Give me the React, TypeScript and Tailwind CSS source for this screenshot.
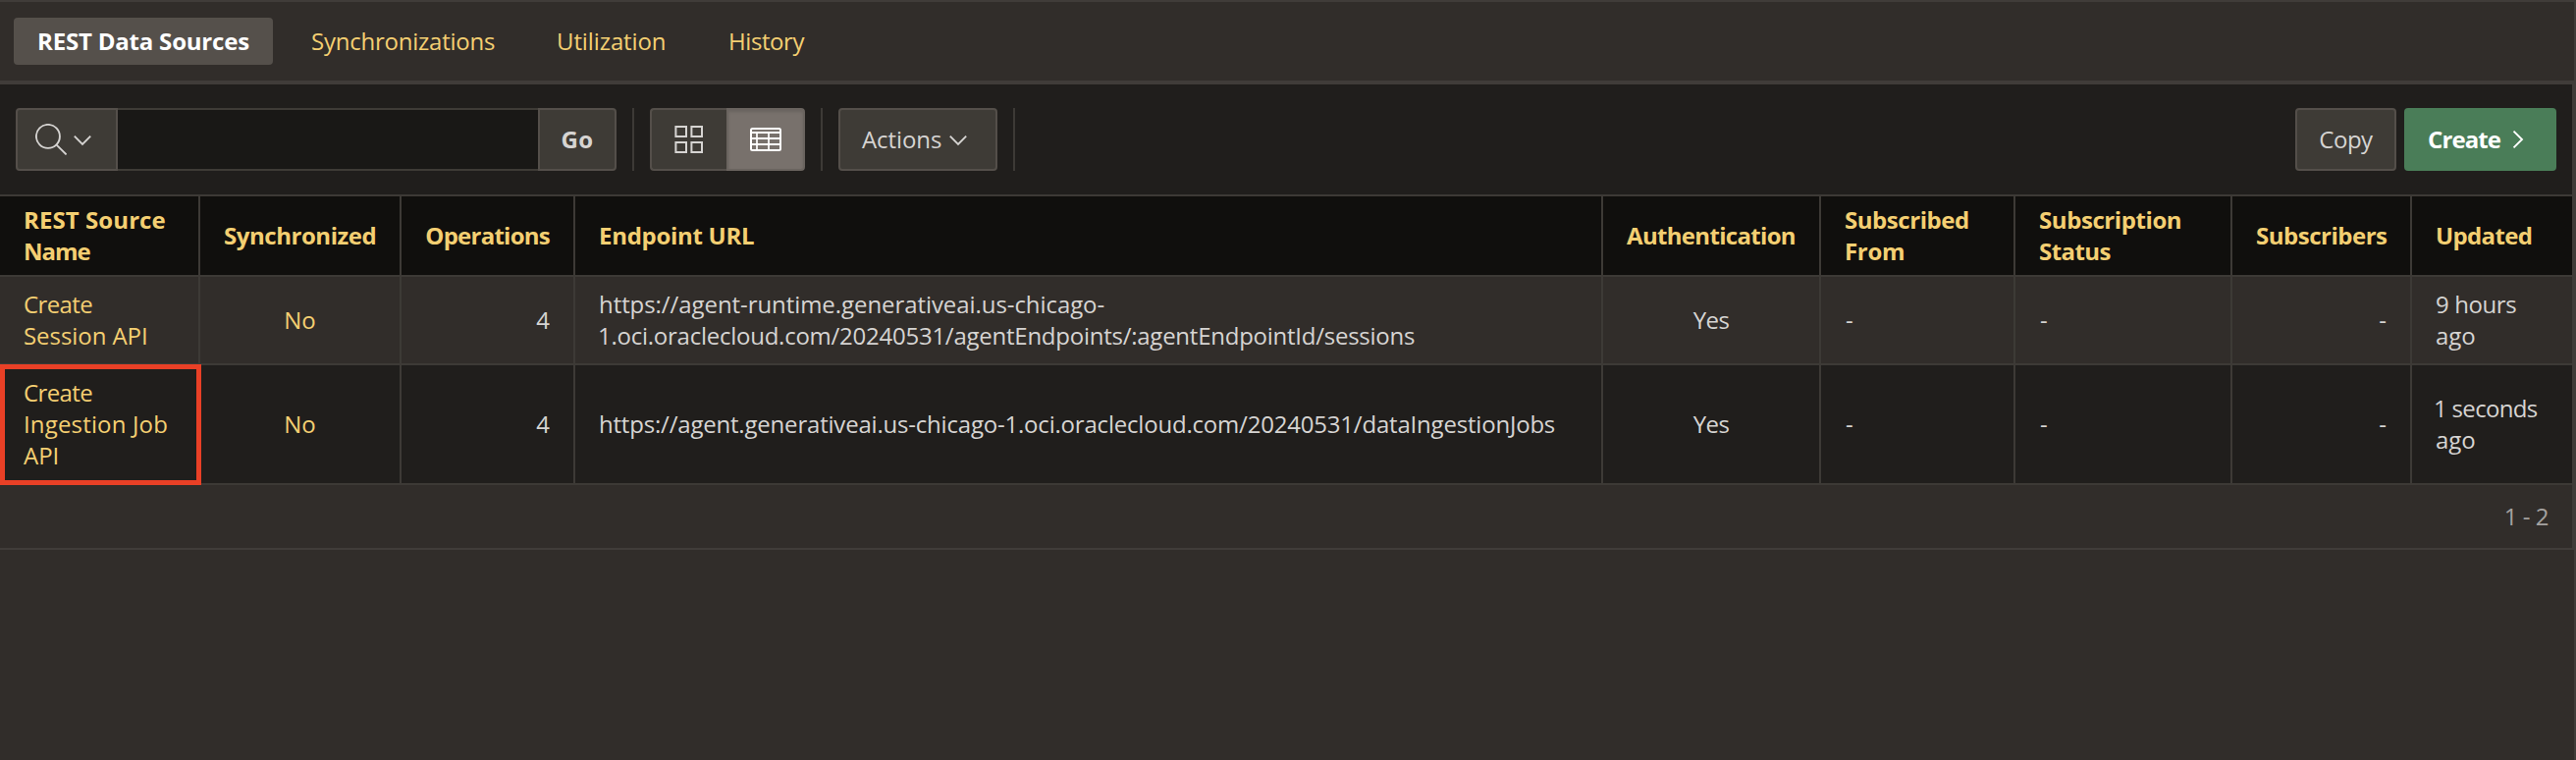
import type { ReactNode } from "react";

type Line = { text: string; track?: string };

type Column = { lines: Line[]; align: string };

const columns: Column[] = [
  { lines: [{ text: "REST Source", track: "tracking-[0.08px]" }, { text: "Name", track: "tracking-[-1px]" }], align: "text-left" },
  { lines: [{ text: "Synchronized", track: "tracking-[-0.45px]" }], align: "text-center" },
  { lines: [{ text: "Operations", track: "tracking-[-0.75px]" }], align: "text-right" },
  { lines: [{ text: "Endpoint URL", track: "tracking-[-0.29px]" }], align: "text-left" },
  { lines: [{ text: "Authentication", track: "tracking-[-0.68px]" }], align: "text-center" },
  { lines: [{ text: "Subscribed", track: "tracking-[-0.45px]" }, { text: "From", track: "tracking-[-0.31px]" }], align: "text-left" },
  { lines: [{ text: "Subscription", track: "tracking-[-0.42px]" }, { text: "Status", track: "tracking-[-0.56px]" }], align: "text-left" },
  { lines: [{ text: "Subscribers", track: "tracking-[-0.49px] mr-px" }], align: "text-right" },
  { lines: [{ text: "Updated", track: "tracking-[-0.65px]" }], align: "text-left" },
];

type Row = { bg: string; height: string; cells: Line[][]; highlighted?: boolean };

const dash: Line[] = [{ text: "-", track: "pl-px" }];

const rows: Row[] = [
  {
    bg: "bg-[#312d2a]",
    height: "h-[90px]",
    cells: [
      [{ text: "Create", track: "tracking-[-0.6px]" }, { text: "Session API", track: "tracking-[-0.06px]" }],
      [{ text: "No" }],
      [{ text: "4" }],
      [
        { text: "https://agent-runtime.generativeai.us-chicago-", track: "tracking-[-0.07px]" },
        { text: "1.oci.oraclecloud.com/20240531/agentEndpoints/:agentEndpointId/sessions", track: "tracking-[-0.25px] -ml-px" },
      ],
      [{ text: "Yes", track: "tracking-[-0.6px]" }],
      dash,
      dash,
      dash,
      [{ text: "9 hours", track: "tracking-[-0.4px]" }, { text: "ago" }],
    ],
  },
  {
    bg: "bg-[#201e1c]",
    height: "h-[122px]",
    highlighted: true,
    cells: [
      [{ text: "Create", track: "tracking-[-0.6px]" }, { text: "Ingestion Job", track: "tracking-[0.16px]" }, { text: "API" }],
      [{ text: "No" }],
      [{ text: "4" }],
      [{ text: "https://agent.generativeai.us-chicago-1.oci.oraclecloud.com/20240531/dataIngestionJobs", track: "tracking-[-0.2px]" }],
      [{ text: "Yes", track: "tracking-[-0.6px]" }],
      dash,
      dash,
      dash,
      [{ text: "1 seconds", track: "tracking-[-0.68px] -ml-0.5" }, { text: "ago" }],
    ],
  },
];

const tableGrid = "grid grid-cols-[204px_205px_177px_1047px_222px_198px_221px_183px_163px]";

function Lines({ lines }: { lines: Line[] }) {
  return (
    <>
      {lines.map((l) => (
        <div key={l.text} className={`whitespace-nowrap ${l.track ?? ""}`}>
          {l.text}
        </div>
      ))}
    </>
  );
}

function Cell({ lines, align, last, link }: { lines: Line[]; align: string; last: boolean; link?: boolean }) {
  return (
    <div
      className={`flex flex-col justify-center px-6 ${align} ${last ? "" : "border-r-2 border-[#3d3a36]"} ${link ? "text-[#f4cf72]" : ""}`}
    >
      <Lines lines={lines} />
    </div>
  );
}

function SearchIcon() {
  return (
    <svg width="32" height="32" viewBox="0 0 32 32" fill="none" stroke="currentColor" strokeWidth="1.9">
      <circle cx="12.9" cy="12.9" r="12" />
      <path d="M21.4 21.4 31.6 31.4" />
    </svg>
  );
}

function ChevronDown() {
  return (
    <svg width="20" height="20" viewBox="0 0 20 20" fill="none" stroke="currentColor" strokeWidth="1.9">
      <path d="M1.8 6.6 10 14.8 18.2 6.6" />
    </svg>
  );
}

function ChevronRight() {
  return (
    <svg width="12" height="20" viewBox="0 0 12 20" fill="none" stroke="currentColor" strokeWidth="1.9">
      <path d="M1.5 1.6 10 10 1.5 18.4" />
    </svg>
  );
}

function GridIcon() {
  return (
    <svg width="30" height="28" viewBox="0 0 30 28" fill="none" stroke="currentColor" strokeWidth="2">
      <rect x="1.4" y="1" width="10.6" height="10" />
      <rect x="17.4" y="1" width="10.6" height="10" />
      <rect x="1.4" y="17" width="10.6" height="10" />
      <rect x="17.4" y="17" width="10.6" height="10" />
    </svg>
  );
}

function TableIcon() {
  return (
    <svg width="32" height="24" viewBox="0 0 32 24" fill="none" stroke="currentColor" strokeWidth="2">
      <rect x="1" y="1" width="30" height="22" rx="1.5" />
      <path d="M1 5h30M1 11h30M1 17h30" />
      <path d="M7 5v18M19 5v18" strokeWidth="1.7" />
    </svg>
  );
}

function Divider() {
  return <div className="mx-4 h-16 w-0.5 bg-[#3d3a36]" />;
}

function Tab({ children, className }: { children: ReactNode; className: string }) {
  return <a className={`pl-6 text-[#f4cf72] ${className}`}>{children}</a>;
}

export default function App() {
  return (
    <div className="flex h-[774px] w-[2624px] flex-col border-t-2 border-r-2 border-[#403c39] bg-[#312d2a] font-['Open_Sans','Noto_Sans',sans-serif] text-2xl leading-8 text-[#d6d4d2]">
      <nav className="flex h-20 shrink-0 items-center pl-[14px]">
        <a className="flex h-12 w-[264px] items-center justify-center rounded bg-[#55504b] font-bold tracking-[-0.2px] whitespace-nowrap text-white">
          REST Data Sources
        </a>
        <Tab className="ml-[15px] w-[250px] tracking-[-0.23px]">Synchronizations</Tab>
        <Tab className="w-[175px] tracking-[-0.1px]">Utilization</Tab>
        <Tab className="tracking-[-0.42px]">History</Tab>
      </nav>

      <main className="border-t-4 border-r-2 border-b-2 border-[#403c39]">
        <div className="flex h-28 items-center bg-[#201e1c] px-4">
          <div className="flex h-16">
            <button className="flex w-[104px] items-center gap-1.5 rounded-l border-2 border-[#544f4a] bg-[#3e3b36] pl-[18px]">
              <SearchIcon />
              <ChevronDown />
            </button>
            <input className="w-[428px] border-y-2 border-[#3e3b36] bg-[#191816] px-4 outline-none" />
            <button className="w-20 rounded-r border-2 border-[#544f4a] bg-[#3e3b36] font-bold tracking-[0.3px]">Go</button>
          </div>
          <Divider />
          <div className="flex h-16 w-[158px]">
            <button className="flex w-[78px] items-center justify-center rounded-l border-2 border-r-0 border-[#544f4a] bg-[#3e3b36]">
              <GridIcon />
            </button>
            <button className="flex w-20 items-center justify-center rounded-r border-2 border-[#6a645f] bg-[#78716c] text-white shadow-[inset_0_2px_3px_rgba(0,0,0,0.12)]">
              <TableIcon />
            </button>
          </div>
          <Divider />
          <button className="flex h-16 w-[162px] items-center rounded border-2 border-[#544f4a] bg-[#3e3b36] pl-[22px]">
            <span className="w-[88px] text-left tracking-[-0.07px]">Actions</span>
            <ChevronDown />
          </button>
          <Divider />
          <div className="ml-auto flex gap-2">
            <button className="h-16 w-[103px] rounded border-2 border-[#544f4a] bg-[#3e3b36] tracking-[-0.5px]">Copy</button>
            <button className="flex h-16 w-[155px] items-center rounded bg-[#4a7d58] pl-6 text-white">
              <span className="w-[86px] text-left font-bold tracking-[-0.9px]">Create</span>
              <ChevronRight />
            </button>
          </div>
        </div>

        <div className={`${tableGrid} h-[84px] border-y-2 border-[#3d3a36] bg-[#100f0d] font-bold text-[#f4cf72]`}>
          {columns.map((c, i) => (
            <Cell key={i} lines={c.lines} align={c.align} last={i === columns.length - 1} />
          ))}
        </div>
        {rows.map((row, r) => (
          <div key={r} className={`relative ${tableGrid} ${row.height} border-b-2 border-[#3d3a36] ${row.bg}`}>
            {row.cells.map((lines, i) => (
              <Cell key={i} lines={lines} align={columns[i].align} last={i === columns.length - 1} link={i < 2} />
            ))}
            {row.highlighted && <div className="absolute -top-px left-0 h-[123px] w-[205px] border-[5px] border-[#e94026]" />}
          </div>
        ))}
        <div className="flex h-16 items-center justify-end pr-6 tracking-[-0.48px] text-[#a5a2a0]">1 - 2</div>
      </main>
    </div>
  );
}
